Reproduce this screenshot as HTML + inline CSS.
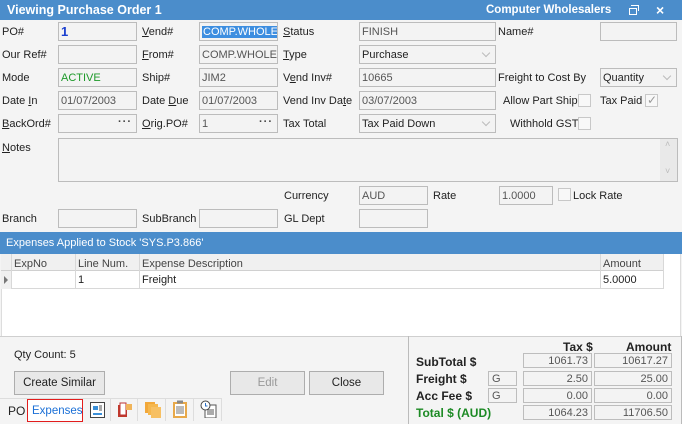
<!DOCTYPE html>
<html><head><meta charset="utf-8"><style>
*{box-sizing:border-box;margin:0;padding:0}
body{width:682px;height:424px;overflow:hidden;background:#f4f4f4;font-family:"Liberation Sans",sans-serif;font-size:11px;color:#222;position:relative}
.a{position:absolute;white-space:nowrap}
.l{position:absolute;white-space:nowrap;line-height:14px}
.i{position:absolute;border:1px solid #bcbcbc;background:#f3f3f3;height:19px;line-height:15px;padding:2px 0 0 2px;color:#555;white-space:nowrap;overflow:hidden}
.dd::after{content:"";position:absolute;right:6px;top:4px;width:5px;height:5px;border-right:1px solid #bbb;border-bottom:1px solid #bbb;transform:rotate(45deg)}
.dots::after{content:"···";position:absolute;right:4px;top:0px;color:#444;font-weight:bold;letter-spacing:1px}
.cb{position:absolute;width:13px;height:13px;border:1px solid #c8c8c8;background:#f8f8f8}
u{text-decoration:underline}
.btn{position:absolute;border:1px solid #adadad;background:#e8e8e8;height:24px;line-height:22px;text-align:center;color:#222;font-size:11.5px}
.g{position:absolute;border:1px solid #bdbdbd;background:#f3f3f3;height:15px;line-height:13px;padding-top:1px;text-align:right;padding-right:3px;color:#555;font-size:11px}
.b{font-weight:bold;position:absolute;white-space:nowrap;font-size:12px}
</style></head><body>
<div class="a" style="left:0;top:0;width:682px;height:20px;background:#4b8dcb"></div>
<div class="a" style="left:7px;top:3px;color:#fff;font-weight:bold;font-size:12.5px">Viewing Purchase Order 1</div>
<div class="a" style="left:486px;top:4px;color:#fff;font-weight:bold;font-size:11.5px">Computer Wholesalers</div>
<div class="a" style="left:629px;top:8px;width:8px;height:7px;border:1.5px solid #fff"></div>
<div class="a" style="left:631px;top:5px;width:8px;height:6px;border-top:1.5px solid #fff;border-right:1.5px solid #fff"></div>
<div class="a" style="left:656px;top:2px;color:#fff;font-size:14px;font-weight:bold">×</div>

<div class="l" style="left:2px;top:25px">PO#</div>
<div class="i" style="left:58px;top:22px;width:79px;color:#1a3fcf;font-weight:bold;font-size:13px;padding-top:1px">1</div>
<div class="l" style="left:142px;top:25px"><u>V</u>end#</div>
<div class="i" style="left:199px;top:22px;width:79px"><span style="background:#3d8ee0;color:#fff;padding:0 1px">COMP.WHOLE</span></div>
<div class="l" style="left:283px;top:25px"><u>S</u>tatus</div>
<div class="i" style="left:359px;top:22px;width:137px">FINISH</div>
<div class="l" style="left:498px;top:25px">Name#</div>
<div class="i" style="left:600px;top:22px;width:77px"></div>

<div class="l" style="left:2px;top:48px">Our Ref#</div>
<div class="i" style="left:58px;top:45px;width:79px"></div>
<div class="l" style="left:142px;top:48px"><u>F</u>rom#</div>
<div class="i" style="left:199px;top:45px;width:79px">COMP.WHOLE</div>
<div class="l" style="left:283px;top:48px"><u>T</u>ype</div>
<div class="i dd" style="left:359px;top:45px;width:137px;color:#222">Purchase</div>

<div class="l" style="left:2px;top:71px">Mode</div>
<div class="i" style="left:58px;top:68px;width:79px;color:#1e9a2a">ACTIVE</div>
<div class="l" style="left:142px;top:71px">Ship#</div>
<div class="i" style="left:199px;top:68px;width:79px">JIM2</div>
<div class="l" style="left:283px;top:71px">V<u>e</u>nd Inv#</div>
<div class="i" style="left:359px;top:68px;width:137px">10665</div>
<div class="l" style="left:498px;top:71px">Freight to Cost By</div>
<div class="i dd" style="left:600px;top:68px;width:77px;color:#222">Quantity</div>

<div class="l" style="left:2px;top:94px">Date <u>I</u>n</div>
<div class="i" style="left:58px;top:91px;width:79px">01/07/2003</div>
<div class="l" style="left:142px;top:94px">Date <u>D</u>ue</div>
<div class="i" style="left:199px;top:91px;width:79px">01/07/2003</div>
<div class="l" style="left:283px;top:94px">Vend Inv Da<u>t</u>e</div>
<div class="i" style="left:359px;top:91px;width:137px">03/07/2003</div>
<div class="l" style="left:503px;top:94px">Allow Part Ship</div>
<div class="cb" style="left:578px;top:94px"></div>
<div class="l" style="left:600px;top:94px">Tax Paid</div>
<div class="cb" style="left:645px;top:94px"></div>
<div class="a" style="left:647px;top:93px;color:#999;font-size:12px">✓</div>

<div class="l" style="left:2px;top:117px"><u>B</u>ackOrd#</div>
<div class="i dots" style="left:58px;top:114px;width:79px"></div>
<div class="l" style="left:142px;top:117px"><u>O</u>rig.PO#</div>
<div class="i dots" style="left:199px;top:114px;width:79px">1</div>
<div class="l" style="left:283px;top:117px">Tax Total</div>
<div class="i dd" style="left:359px;top:114px;width:137px;color:#222">Tax Paid Down</div>
<div class="l" style="left:510px;top:117px">Withhold GST</div>
<div class="cb" style="left:578px;top:117px"></div>

<div class="l" style="left:2px;top:141px"><u>N</u>otes</div>
<div class="i" style="left:58px;top:138px;width:620px;height:44px"></div>
<div class="a" style="left:660px;top:139px;width:17px;height:42px;background:#e9e9e9"></div>
<div class="a" style="left:665px;top:139px;color:#bbb;font-size:9px">˄</div>
<div class="a" style="left:665px;top:166px;color:#bbb;font-size:9px">˅</div>

<div class="l" style="left:284px;top:189px">Currency</div>
<div class="i" style="left:359px;top:186px;width:69px">AUD</div>
<div class="l" style="left:433px;top:189px">Rate</div>
<div class="i" style="left:499px;top:186px;width:54px">1.0000</div>
<div class="cb" style="left:558px;top:188px"></div>
<div class="l" style="left:573px;top:189px">Lock Rate</div>

<div class="l" style="left:2px;top:212px">Branch</div>
<div class="i" style="left:58px;top:209px;width:79px"></div>
<div class="l" style="left:142px;top:212px">SubBranch</div>
<div class="i" style="left:199px;top:209px;width:79px"></div>
<div class="l" style="left:284px;top:212px">GL Dept</div>
<div class="i" style="left:359px;top:209px;width:69px"></div>

<div class="a" style="left:0;top:232px;width:682px;height:22px;background:#4b8dcb;color:#fff;padding:5px 0 0 6px">Expenses Applied to Stock 'SYS.P3.866'</div>
<div class="a" style="left:1px;top:254px;width:680px;height:82px;background:#fff;border-left:1px solid #ddd;border-right:1px solid #ddd"></div>
<div class="a" style="left:1px;top:254px;width:663px;height:17px;background:#f0f0f0;border-bottom:1px solid #d0d0d0"></div>
<div class="a" style="left:1px;top:271px;width:663px;height:18px;border-bottom:1px solid #d8d8d8"></div>
<div class="a" style="left:11px;top:254px;width:1px;height:35px;background:#d8d8d8"></div>
<div class="a" style="left:75px;top:254px;width:1px;height:35px;background:#d8d8d8"></div>
<div class="a" style="left:139px;top:254px;width:1px;height:35px;background:#d8d8d8"></div>
<div class="a" style="left:600px;top:254px;width:1px;height:35px;background:#d8d8d8"></div>
<div class="a" style="left:663px;top:254px;width:1px;height:35px;background:#d8d8d8"></div>
<div class="a" style="left:1px;top:271px;width:10px;height:18px;background:#f0f0f0"></div>
<div class="a" style="left:4px;top:276px;border-left:4px solid #777;border-top:4px solid transparent;border-bottom:4px solid transparent"></div>
<div class="l" style="left:14px;top:257px;color:#444">ExpNo</div>
<div class="l" style="left:78px;top:257px;color:#444">Line Num.</div>
<div class="l" style="left:142px;top:257px;color:#444">Expense Description</div>
<div class="l" style="left:603px;top:257px;color:#444">Amount</div>
<div class="l" style="left:78px;top:273px">1</div>
<div class="l" style="left:142px;top:273px">Freight</div>
<div class="l" style="left:603px;top:273px">5.0000</div>

<div class="a" style="left:0;top:336px;width:682px;height:1px;background:#cfcfcf"></div>
<div class="a" style="left:408px;top:336px;width:274px;height:88px;border-left:1px solid #bbb;border-right:1px solid #bbb"></div>
<div class="l" style="left:14px;top:348px">Qty Count: 5</div>
<div class="btn" style="left:14px;top:371px;width:91px">Create Similar</div>
<div class="btn" style="left:230px;top:371px;width:75px;color:#999">Edit</div>
<div class="btn" style="left:309px;top:371px;width:75px">Close</div>
<div class="a" style="left:0;top:398px;width:222px;height:1px;background:#ddd"></div>
<div class="l" style="left:8px;top:404px;font-size:12px">PO</div>
<div class="a" style="left:27px;top:399px;width:56px;height:23px;border:1px solid #e21d1d;background:#fff;color:#1a6fd6;padding:5px 0 0 4px;font-size:11.5px;line-height:13px">Expenses</div>
<div class="a" style="left:110px;top:399px;width:1px;height:22px;background:#ddd"></div>
<div class="a" style="left:137px;top:399px;width:1px;height:22px;background:#ddd"></div>
<div class="a" style="left:165px;top:399px;width:1px;height:22px;background:#ddd"></div>
<div class="a" style="left:193px;top:399px;width:1px;height:22px;background:#ddd"></div>
<div class="a" style="left:221px;top:399px;width:1px;height:22px;background:#ddd"></div>
<svg class="a" style="left:90px;top:402px" width="15" height="16"><rect x="0.5" y="0.5" width="14" height="15" fill="#fff" stroke="#444"/><rect x="3" y="4" width="5" height="4" fill="#3a8fd8"/><rect x="3" y="11" width="9" height="2" fill="#3a8fd8"/><path d="M9 4h3M9 6h3M9 8h3" stroke="#555"/></svg>
<svg class="a" style="left:117px;top:401px" width="16" height="17"><rect x="1" y="4" width="9" height="12" fill="#c0392b"/><rect x="3" y="2" width="6" height="12" fill="#fff" stroke="#b33"/><path d="M9 3h6v6h-6z" fill="#f0b45a"/></svg>
<svg class="a" style="left:144px;top:401px" width="18" height="17"><rect x="1" y="1" width="10" height="11" fill="#f2a83a"/><rect x="4" y="3" width="10" height="11" fill="#f5b74e"/><rect x="7" y="6" width="10" height="11" fill="#f7c063"/></svg>
<svg class="a" style="left:172px;top:400px" width="16" height="18"><rect x="1" y="2" width="14" height="16" fill="#e8a94a"/><rect x="3" y="4" width="10" height="12" fill="#fff"/><rect x="5" y="0.5" width="6" height="3" fill="#888"/><path d="M4 7h8M4 9h8M4 11h8M4 13h8" stroke="#777"/></svg>
<svg class="a" style="left:200px;top:400px" width="17" height="18"><rect x="5" y="5" width="11" height="13" fill="#fff" stroke="#555"/><path d="M7 10h7M7 12h7M7 14h7" stroke="#555"/><circle cx="5.5" cy="5.5" r="4.5" fill="#fff" stroke="#444"/><path d="M5.5 3v3h2" stroke="#2a6fc6" fill="none"/></svg>

<div class="b" style="left:563px;top:340px">Tax $</div>
<div class="b" style="left:626px;top:340px">Amount</div>
<div class="b" style="left:416px;top:355px">SubTotal $</div>
<div class="b" style="left:416px;top:372px">Freight $</div>
<div class="b" style="left:416px;top:389px">Acc Fee $</div>
<div class="b" style="left:416px;top:406px;color:#1c8a24">Total $ (AUD)</div>
<div class="g" style="left:523px;top:353px;width:69px">1061.73</div>
<div class="g" style="left:594px;top:353px;width:78px">10617.27</div>
<div class="g" style="left:488px;top:371px;width:29px;text-align:left;padding-left:3px">G</div>
<div class="g" style="left:523px;top:371px;width:69px">2.50</div>
<div class="g" style="left:594px;top:371px;width:78px">25.00</div>
<div class="g" style="left:488px;top:388px;width:29px;text-align:left;padding-left:3px">G</div>
<div class="g" style="left:523px;top:388px;width:69px">0.00</div>
<div class="g" style="left:594px;top:388px;width:78px">0.00</div>
<div class="g" style="left:523px;top:405px;width:69px">1064.23</div>
<div class="g" style="left:594px;top:405px;width:78px">11706.50</div>
</body></html>
